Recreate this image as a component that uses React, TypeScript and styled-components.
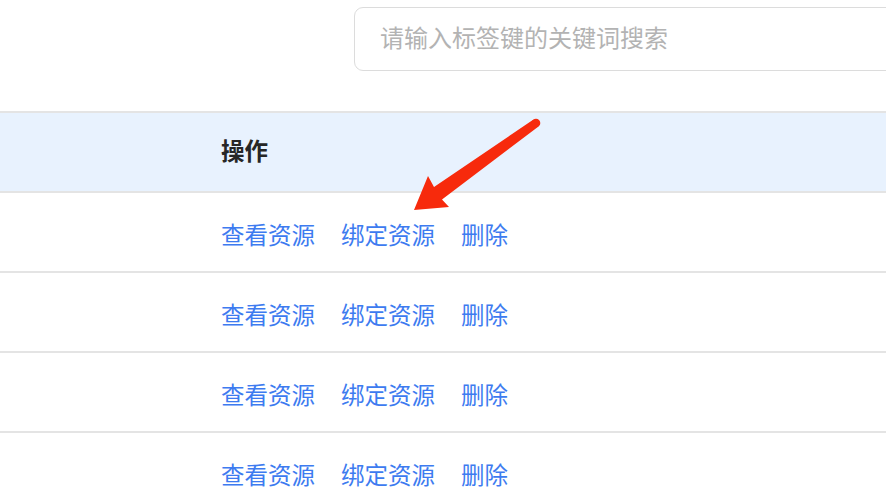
import React from "react";
import styled, { createGlobalStyle } from "styled-components";

const GlobalStyle = createGlobalStyle`
  html, body {
    margin: 0;
    padding: 0;
    background: #ffffff;
    overflow: hidden;
  }
  body {
    font-family: "Noto Sans CJK SC", "Noto Sans", "Liberation Sans", sans-serif;
  }
  * { box-sizing: border-box; }
`;

const Page = styled.div`
  position: relative;
  width: 886px;
  height: 504px;
  overflow: hidden;
  display: flex;
  flex-direction: column;
`;

const Toolbar = styled.div`
  height: 111px;
  flex: none;
  display: flex;
  align-items: flex-start;
  padding: 7px 0 0 354px;
`;

const SearchInput = styled.input`
  flex: none;
  width: 600px;
  height: 64px;
  border: 1.5px solid #dcdcdc;
  border-radius: 9px;
  padding: 0 0 6px 25px;
  font-family: "Noto Sans CJK SC", sans-serif;
  font-size: 24px;
  color: #333;
  outline: none;
  background: #fff;
  &::placeholder {
    color: #b3b3b3;
  }
`;

const Table = styled.div`
  display: flex;
  flex-direction: column;
`;

const Row = styled.div<{ $head?: boolean }>`
  display: grid;
  grid-template-columns: 205px 1fr;
  height: ${(p) => (p.$head ? "82px" : "80px")};
  background: ${(p) => (p.$head ? "#e8f2fe" : "#ffffff")};
  border-top: ${(p) => (p.$head ? "2px solid #e4e4e4" : "none")};
  border-bottom: 2px solid #e4e4e4;
`;

const Cell = styled.div<{ $head?: boolean }>`
  display: flex;
  align-items: center;
  padding-left: 16px;
  padding-bottom: ${(p) => (p.$head ? "4px" : "0")};
  padding-top: ${(p) => (p.$head ? "0" : "5px")};
  font-size: 23.5px;
  font-weight: ${(p) => (p.$head ? 700 : 400)};
  color: ${(p) => (p.$head ? "#262626" : "#3d7bf0")};
`;

const Actions = styled.div`
  display: flex;
  gap: 26px;
`;

const Link = styled.a`
  color: #3d7bf0;
  text-decoration: none;
  cursor: pointer;
  font-size: 23.5px;
  line-height: 1;
`;

const ArrowLayer = styled.svg`
  position: absolute;
  left: 0;
  top: 0;
  pointer-events: none;
`;

const Arrow = () => (
  <ArrowLayer width="886" height="504" viewBox="0 0 886 504">
    <polygon
      points="414,210 428,176 434,187 533.5,119.5 538.5,126.5 442,199.5 449,207"
      fill="#f72a0c"
    />
    <circle cx="536" cy="123" r="4.3" fill="#f72a0c" />
  </ArrowLayer>
);

const rows = [0, 1, 2, 3];

export default function App() {
  return (
    <>
      <GlobalStyle />
      <Page>
        <Toolbar>
          <SearchInput placeholder="请输入标签键的关键词搜索" />
        </Toolbar>
        <Table>
          <Row $head>
            <Cell $head />
            <Cell $head>操作</Cell>
          </Row>
          {rows.map((r) => (
            <Row key={r}>
              <Cell />
              <Cell>
                <Actions>
                  <Link>查看资源</Link>
                  <Link>绑定资源</Link>
                  <Link>删除</Link>
                </Actions>
              </Cell>
            </Row>
          ))}
        </Table>
        <Arrow />
      </Page>
    </>
  );
}
